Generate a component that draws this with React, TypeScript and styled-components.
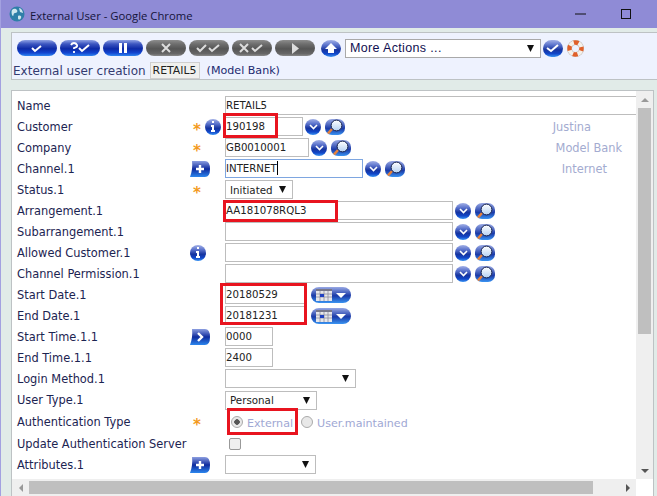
import React from "react";
import styled, { createGlobalStyle } from "styled-components";

const Global = createGlobalStyle`
  html, body { margin: 0; padding: 0; height: 100%; overflow: hidden; background: #e1ebe8; }
  body { font-family: "DejaVu Sans", sans-serif; }
  * { box-sizing: border-box; }
`;

const Win = styled.div`
  width: 657px;
  height: 496px;
  display: flex;
  flex-direction: column;
  overflow: hidden;
  border-left: 1px solid #a3a1e0;
`;

const TitleBar = styled.div`
  height: 28px;
  flex: none;
  background: #8f8bd6;
  display: flex;
  align-items: center;
  padding: 0 9px 0 9px;
  margin-left: -1px;
  color: #14143a;
  font: 11.3px "Open Sans", sans-serif;
`;

const TitleText = styled.span`
  margin-left: 5px;
  padding-top: 2px;
  flex: 1;
`;

const WinButton = styled.div`
  width: 45px;
  height: 28px;
  display: flex;
  align-items: center;
  justify-content: center;
`;

const Content = styled.div`
  flex: 1;
  min-height: 0;
  padding: 4px 3px 0 10px;
  display: flex;
  flex-direction: column;
  gap: 10px;
`;

const Toolbar = styled.div`
  height: 48px;
  flex: none;
  background: #eef2fe;
  border: solid #bdc2c4;
  border-width: 1px 0 1px 1px;
  margin-right: -3px;
  padding: 5px 0 0 5px;
`;

const ButtonRow = styled.div`
  display: flex;
  align-items: center;
  height: 20px;
`;

const Pill = styled.button<{ $grey?: boolean }>`
  width: 40px;
  height: 16px;
  margin-right: 3px;
  padding: 0;
  border: none;
  border-radius: 8px;
  display: flex;
  align-items: center;
  justify-content: center;
  background: ${(p) =>
    p.$grey
      ? "linear-gradient(#8d8d8d 0%, #6e6e6e 25%, #555 55%, #666 85%, #8a8a8a 100%)"
      : "linear-gradient(#8fa2e4 0%, #3c56c0 25%, #0d2aa6 55%, #1245d0 80%, #2f86f0 100%)"};
`;

const Round = styled.div<{ $w?: number; $h?: number }>`
  width: ${(p) => p.$w ?? 16}px;
  height: ${(p) => p.$h ?? 16}px;
  flex: none;
  border-radius: 50%;
  display: flex;
  align-items: center;
  justify-content: center;
  background: linear-gradient(#a2b0e6 0%, #5a72cc 30%, #16349f 58%, #1146c8 80%, #3a94f2 100%);
`;

const UpRound = styled(Round)`
  margin: 0 4px 0 3px;
`;

const OkRound = styled(Round)`
  border-radius: 9px;
  margin: 0 4px 0 2px;
`;

const MoreSelect = styled.div`
  width: 196px;
  height: 19px;
  background: #fff;
  border: 1px solid #a9a9a9;
  display: flex;
  align-items: center;
  justify-content: space-between;
  padding: 0 6px 0 4px;
  font: 12.5px "Liberation Sans", sans-serif;
  color: #101050;
  letter-spacing: 0.35px;
`;

const SubTitle = styled.div`
  display: flex;
  align-items: center;
  margin-top: 4px;
  margin-left: -4px;
  height: 17px;
  font-size: 12px;
  color: #333a70;
`;

const IdBox = styled.span`
  margin-left: 4px;
  margin-right: 7px;
  height: 17px;
  padding: 0 2px;
  width: 50px;
  background: #f0f0ee;
  border: 1px solid #cfcfcf;
  color: #222;
  line-height: 15px;
  font-size: 10.9px;
  white-space: nowrap;
`;

const Bank = styled.span`
  font-size: 11.1px;
  color: #1c2a70;
`;

const Panel = styled.div`
  flex: 1;
  min-height: 0;
  display: grid;
  grid-template-columns: 624px 17px;
  grid-template-rows: 388px 17px;
  border: 1px solid #bdc2c4;
  background: #fff;
  border-bottom: none;
  overflow: hidden;
  position: relative;
`;

const FormArea = styled.div`
  overflow: hidden;
  padding: 4px 0 0 5px;
`;

const Row = styled.div<{ $h?: number }>`
  height: ${(p) => p.$h ?? 21}px;
  display: flex;
  align-items: center;
  font-size: 11.4px;
  color: #1c2452;
`;

const Label = styled.div`
  width: 173px;
  flex: none;
  white-space: nowrap;
`;

const Marker = styled.div`
  width: 35px;
  flex: none;
  display: flex;
  align-items: center;
`;

const Star = styled.span`
  color: #f39a1e;
  font: bold 15px "DejaVu Sans", sans-serif;
  margin: 6px 0 0 3px;
  width: 12px;
  height: 12px;
  line-height: 12px;
`;

const Field = styled.div<{ $w: number; $focus?: boolean; $open?: boolean }>`
  width: ${(p) => p.$w}px;
  height: 19px;
  flex: none;
  border: 1px solid ${(p) => (p.$focus ? "#7ea6e0" : "#bdbdbd")};
  border-right-width: ${(p) => (p.$open ? 0 : 1)}px;
  background: #fff;
  padding: 0;
  line-height: 17px;
  font-size: 10.2px;
  color: #222;
  white-space: nowrap;
`;

const Caret = styled.span`
  display: inline-block;
  width: 1px;
  height: 14px;
  background: #000;
  vertical-align: -3px;
`;

const Drop = styled.div<{ $w: number }>`
  width: ${(p) => p.$w}px;
  height: 19px;
  flex: none;
  border: 1px solid #bdbdbd;
  background: #fff;
  display: flex;
  align-items: center;
  justify-content: space-between;
  padding: 0 6px 0 4px;
  font-size: 10.3px;
  color: #222;
`;

const Tools = styled.div<{ $left?: number }>`
  display: flex;
  align-items: center;
  gap: 4px;
  margin-left: ${(p) => p.$left ?? 2}px;
`;

const Note = styled.div<{ $right: number }>`
  margin-left: auto;
  margin-right: ${(p) => p.$right}px;
  font-size: 11.4px;
  color: #a3abd0;
`;

const RadioGroup = styled.div`
  display: flex;
  align-items: center;
  margin-left: 6px;
`;

const Radio = styled.span<{ $on?: boolean; $left?: number }>`
  width: 12px;
  height: 12px;
  flex: none;
  border-radius: 50%;
  border: 1px solid #aaa;
  background: ${(p) => (p.$on ? "radial-gradient(circle, #555 0 2.5px, #e8e8e8 3px)" : "#e8e8e8")};
  margin-left: ${(p) => p.$left ?? 0}px;
  margin-right: 4px;
`;

const Muted = styled.span`
  color: #a0a8d4;
  font-size: 11.1px;
  padding-top: 3px;
`;

const Check = styled.span`
  width: 12px;
  height: 12px;
  margin-left: 4px;
  border: 1px solid #999;
  border-radius: 2px;
  background: #f0f0f0;
`;

const VBar = styled.div`
  grid-row: 1;
  grid-column: 2;
  background: #efefef;
  display: flex;
  flex-direction: column;
  align-items: center;
`;

const VThumb = styled.div`
  width: 13px;
  height: 226px;
  flex: none;
  background: #bfbfbf;
`;

const HBar = styled.div`
  grid-row: 2;
  grid-column: 1;
  background: #efefef;
  display: flex;
  align-items: center;
`;

const HThumb = styled.div`
  width: 564px;
  height: 13px;
  flex: none;
  background: #bfbfbf;
`;

const Spacer = styled.div`
  flex: 1;
`;

const ArrowCell = styled.div`
  width: 17px;
  height: 17px;
  flex: none;
  display: flex;
  align-items: center;
  justify-content: center;
`;

const Arrow = styled.div<{ $dir: "up" | "down" | "left" | "right" }>`
  width: 0;
  height: 0;
  border: 4px solid transparent;
  ${(p) => (p.$dir === "up" ? "border-top: none; border-bottom: 4px solid #999;" : "")}
  ${(p) => (p.$dir === "down" ? "border-bottom: none; border-top: 4px solid #555;" : "")}
  ${(p) => (p.$dir === "left" ? "border-left: none; border-right: 4px solid #999;" : "")}
  ${(p) => (p.$dir === "right" ? "border-right: none; border-left: 4px solid #555;" : "")}
`;

// red annotation boxes drawn over the screenshot
const Highlight = styled.div<{ $x: number; $y: number; $w: number; $h: number }>`
  position: absolute;
  left: ${(p) => p.$x}px;
  top: ${(p) => p.$y}px;
  width: ${(p) => p.$w}px;
  height: ${(p) => p.$h}px;
  border: 3px solid #e8141f;
  pointer-events: none;
`;

const Mark = ({ d, w = 14 }: { d: string; w?: number }) => (
  <svg width={w} height="10" viewBox={`0 0 ${w} 10`}>
    <path d={d} fill="none" stroke="#fff" strokeWidth="2" />
  </svg>
);

const TICK = "M2 5l3 3 6-5";
const DROP_ARROW = (
  <svg width="7" height="7" viewBox="0 0 7 7">
    <path d="M0 0h7L3.5 7z" fill="#111" />
  </svg>
);

const Globe = () => (
  <svg width="16" height="16" viewBox="0 0 16 16">
    <circle cx="8" cy="8" r="7.5" fill="#2f7fa8" />
    <path d="M3 4c2-2 4-1 5 0s0 3-2 3-1 3-2 3-2-4-1-6zM10 2c2 0 4 3 4 5l-3-1zM9 10c2-1 4 0 3 2s-3 2-3 0z" fill="#cfe6ee" />
  </svg>
);

const PlusWedge = ({ glyph }: { glyph: "plus" | "next" }) => (
  <svg width="20" height="16" viewBox="0 0 20 16">
    <defs>
      <linearGradient id={`wedge-${glyph}`} x1="0" y1="0" x2="0" y2="1">
        <stop offset="0" stopColor="#8c9ee0" />
        <stop offset="0.5" stopColor="#0f2b9e" />
        <stop offset="1" stopColor="#2b86ee" />
      </linearGradient>
    </defs>
    <path d="M2 0h13q5 0 5 8t-5 8H0q3-8 2-16z" fill={`url(#wedge-${glyph})`} />
    {glyph === "plus" ? (
      <path d="M10 4v8M6 8h8" stroke="#fff" strokeWidth="2.4" />
    ) : (
      <path d="M8 4l4 4-4 4" stroke="#fff" strokeWidth="2.4" fill="none" />
    )}
  </svg>
);

const Info = () => (
  <Round>
    <svg width="6" height="11" viewBox="0 0 6 11">
      <path d="M2 0h2v2H2zM1 4h3v5h1v2H1V9h1V6H1z" fill="#fff" />
    </svg>
  </Round>
);

const Chevron = () => (
  <Round>
    <svg width="9" height="6" viewBox="0 0 9 6">
      <path d="M1 1l3.5 3.5L8 1" fill="none" stroke="#fff" strokeWidth="1.6" />
    </svg>
  </Round>
);

const Lens = ({ id }: { id: string }) => (
  <svg width="20" height="16" viewBox="0 0 20 16">
    <defs>
      <linearGradient id={`lens-bg-${id}`} x1="0" y1="0" x2="0" y2="1">
        <stop offset="0" stopColor="#98a8e4" />
        <stop offset="0.6" stopColor="#1a3aa8" />
        <stop offset="1" stopColor="#3a94f2" />
      </linearGradient>
      <linearGradient id={`lens-glass-${id}`} x1="0" y1="0" x2="0" y2="1">
        <stop offset="0" stopColor="#ffffff" />
        <stop offset="1" stopColor="#b4d0f2" />
      </linearGradient>
    </defs>
    <rect width="20" height="16" rx="7" fill={`url(#lens-bg-${id})`} />
    <path d="M7 10l-4 4.5" stroke="#e8823a" strokeWidth="2.6" />
    <circle cx="11.5" cy="6.5" r="5.4" fill={`url(#lens-glass-${id})`} stroke="#14204a" strokeWidth="1" />
  </svg>
);

const Calendar = ({ id }: { id: string }) => (
  <svg width="40" height="16" viewBox="0 0 40 16">
    <defs>
      <linearGradient id={`cal-bg-${id}`} x1="0" y1="0" x2="0" y2="1">
        <stop offset="0" stopColor="#98a8e4" />
        <stop offset="0.55" stopColor="#1a3aa8" />
        <stop offset="1" stopColor="#3a94f2" />
      </linearGradient>
    </defs>
    <rect width="40" height="16" rx="8" fill={`url(#cal-bg-${id})`} />
    <rect x="5" y="2" width="16" height="12" fill="#e6e6ea" />
    <rect x="5" y="2" width="16" height="2" fill="#77778a" />
    <path d="M5 7h16M5 10h16M9 4v10M13 4v10M17 4v10" stroke="#8e8e9e" strokeWidth="0.8" />
    <rect x="9" y="7" width="4" height="3" fill="#2040c0" />
    <path d="M25 6h10l-5 5z" fill="#fff" />
  </svg>
);

const Lifebuoy = () => (
  <svg width="17" height="17" viewBox="0 0 17 17">
    <circle cx="8.5" cy="8.5" r="6" fill="none" stroke="#b9b3ab" strokeWidth="5" />
    <circle cx="8.5" cy="8.5" r="6" fill="none" stroke="#f4f0ea" strokeWidth="4" />
    <circle
      cx="8.5"
      cy="8.5"
      r="6"
      fill="none"
      stroke="#e0602a"
      strokeWidth="4.4"
      strokeDasharray="4.7 4.7"
      strokeDashoffset="2.35"
    />
  </svg>
);

const Lookup = ({ id }: { id: string }) => (
  <Tools>
    <Chevron />
    <Lens id={id} />
  </Tools>
);

export default function App() {
  return (
    <Win>
      <Global />
      <TitleBar>
        <Globe />
        <TitleText>External User - Google Chrome</TitleText>
        <WinButton>
          <svg width="11" height="2" viewBox="0 0 11 2">
            <path d="M0 1h11" stroke="#111" />
          </svg>
        </WinButton>
        <WinButton>
          <svg width="10" height="10" viewBox="0 0 10 10">
            <rect x="0.5" y="0.5" width="9" height="9" fill="none" stroke="#111" />
          </svg>
        </WinButton>
      </TitleBar>
      <Content>
        <Toolbar>
          <ButtonRow>
            <Pill>
              <Mark d={TICK} />
            </Pill>
            <Pill>
              <svg width="22" height="12" viewBox="0 0 22 12">
                <path d="M2 3q1-2 3-2t3 2-3 3v1M5 9v2" fill="none" stroke="#fff" strokeWidth="1.8" />
                <path d="M10 6l3 3 7-6" fill="none" stroke="#fff" strokeWidth="2" />
              </svg>
            </Pill>
            <Pill>
              <svg width="8" height="10" viewBox="0 0 8 10">
                <path d="M0 0h3v10H0zM5 0h3v10H5z" fill="#fff" />
              </svg>
            </Pill>
            <Pill $grey>
              <svg width="10" height="10" viewBox="0 0 10 10">
                <path d="M1 1l8 8M9 1l-8 8" stroke="#ddd" strokeWidth="2" />
              </svg>
            </Pill>
            <Pill $grey>
              <svg width="26" height="10" viewBox="0 0 26 10">
                <path d="M1 5l3 3 6-6M13 5l3 3 7-6" fill="none" stroke="#ddd" strokeWidth="2" />
              </svg>
            </Pill>
            <Pill $grey>
              <svg width="26" height="10" viewBox="0 0 26 10">
                <path d="M1 1l8 8M9 1l-8 8M13 5l3 3 7-6" fill="none" stroke="#ddd" strokeWidth="2" />
              </svg>
            </Pill>
            <Pill $grey>
              <svg width="7" height="11" viewBox="0 0 7 11">
                <path d="M0 0l7 5.5L0 11z" fill="#ddd" />
              </svg>
            </Pill>
            <UpRound $w={20} $h={17}>
              <svg width="12" height="10" viewBox="0 0 12 10">
                <path d="M6 0l6 6H9v4H3V6H0z" fill="#fff" />
              </svg>
            </UpRound>
            <MoreSelect>
              More Actions ...
              {DROP_ARROW}
            </MoreSelect>
            <OkRound $w={20} $h={17}>
              <Mark d="M1 5l4 3 7-6" />
            </OkRound>
            <Lifebuoy />
          </ButtonRow>
          <SubTitle>
            External user creation
            <IdBox>RETAIL5</IdBox>
            <Bank>(Model Bank)</Bank>
          </SubTitle>
        </Toolbar>
        <Panel>
          <FormArea>
            <Row>
              <Label>Name</Label>
              <Marker />
              <Field $w={420} $open>RETAIL5</Field>
            </Row>
            <Row>
              <Label>Customer</Label>
              <Marker>
                <Star>*</Star>
                <Info />
              </Marker>
              <Field $w={78}>190198</Field>
              <Lookup id="customer" />
              <Note $right={45}>Justina</Note>
            </Row>
            <Row>
              <Label>Company</Label>
              <Marker>
                <Star>*</Star>
              </Marker>
              <Field $w={84}>GB0010001</Field>
              <Lookup id="company" />
              <Note $right={14}>Model Bank</Note>
            </Row>
            <Row>
              <Label>Channel.1</Label>
              <Marker>
                <PlusWedge glyph="plus" />
              </Marker>
              <Field $w={138} $focus>
                INTERNET
                <Caret />
              </Field>
              <Lookup id="channel" />
              <Note $right={29}>Internet</Note>
            </Row>
            <Row>
              <Label>Status.1</Label>
              <Marker>
                <Star>*</Star>
              </Marker>
              <Drop $w={68}>
                Initiated
                {DROP_ARROW}
              </Drop>
            </Row>
            <Row>
              <Label>Arrangement.1</Label>
              <Marker />
              <Field $w={228}>AA181078RQL3</Field>
              <Lookup id="arrangement" />
            </Row>
            <Row>
              <Label>Subarrangement.1</Label>
              <Marker />
              <Field $w={228} />
              <Lookup id="sub" />
            </Row>
            <Row>
              <Label>Allowed Customer.1</Label>
              <Marker>
                <Info />
              </Marker>
              <Field $w={228} />
              <Lookup id="allowed" />
            </Row>
            <Row>
              <Label>Channel Permission.1</Label>
              <Marker />
              <Field $w={228} />
              <Lookup id="permission" />
            </Row>
            <Row>
              <Label>Start Date.1</Label>
              <Marker />
              <Field $w={80}>20180529</Field>
              <Tools $left={6}>
                <Calendar id="start" />
              </Tools>
            </Row>
            <Row>
              <Label>End Date.1</Label>
              <Marker />
              <Field $w={80}>20181231</Field>
              <Tools $left={6}>
                <Calendar id="end" />
              </Tools>
            </Row>
            <Row>
              <Label>Start Time.1.1</Label>
              <Marker>
                <PlusWedge glyph="next" />
              </Marker>
              <Field $w={48}>0000</Field>
            </Row>
            <Row>
              <Label>End Time.1.1</Label>
              <Marker />
              <Field $w={48}>2400</Field>
            </Row>
            <Row>
              <Label>Login Method.1</Label>
              <Marker />
              <Drop $w={131}>
                <span />
                {DROP_ARROW}
              </Drop>
            </Row>
            <Row $h={22}>
              <Label>User Type.1</Label>
              <Marker />
              <Drop $w={92}>
                Personal
                {DROP_ARROW}
              </Drop>
            </Row>
            <Row $h={22}>
              <Label>Authentication Type</Label>
              <Marker>
                <Star>*</Star>
              </Marker>
              <RadioGroup>
                <Radio $on />
                <Muted>External</Muted>
                <Radio $left={8} />
                <Muted>User.maintained</Muted>
              </RadioGroup>
            </Row>
            <Row>
              <Label>Update Authentication Server</Label>
              <Marker />
              <Check />
            </Row>
            <Row>
              <Label>Attributes.1</Label>
              <Marker>
                <PlusWedge glyph="plus" />
              </Marker>
              <Drop $w={91}>
                <span />
                {DROP_ARROW}
              </Drop>
            </Row>
          </FormArea>
          <VBar>
            <ArrowCell>
              <Arrow $dir="up" />
            </ArrowCell>
            <VThumb />
            <Spacer />
            <ArrowCell>
              <Arrow $dir="down" />
            </ArrowCell>
          </VBar>
          <HBar>
            <ArrowCell>
              <Arrow $dir="left" />
            </ArrowCell>
            <HThumb />
            <Spacer />
            <ArrowCell>
              <Arrow $dir="right" />
            </ArrowCell>
          </HBar>
          <Highlight $x={211} $y={22} $w={55} $h={25} />
          <Highlight $x={211} $y={109} $w={115} $h={22} />
          <Highlight $x={208} $y={192} $w={87} $h={42} />
          <Highlight $x={215} $y={317} $w={71} $h={27} />
        </Panel>
      </Content>
    </Win>
  );
}
